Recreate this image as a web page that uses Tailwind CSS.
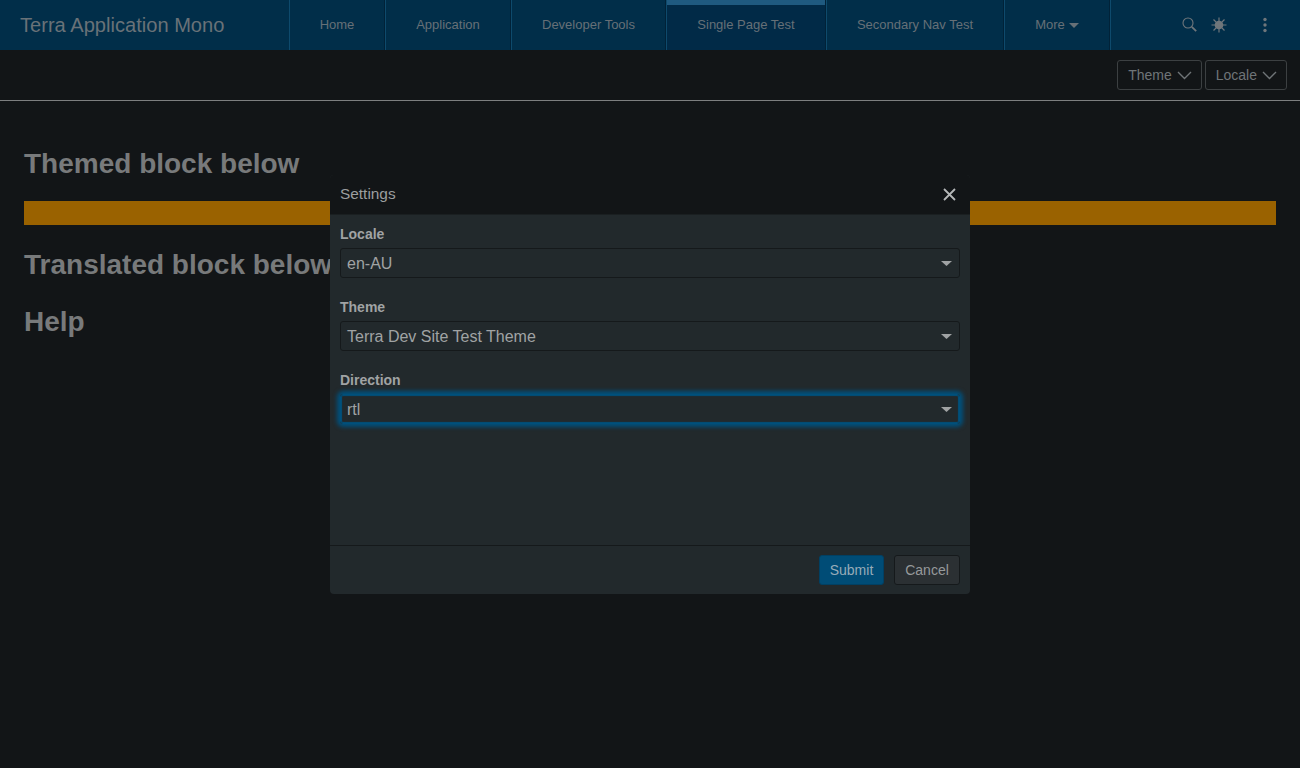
<!DOCTYPE html>
<html lang="en">
<head>
    <meta charset="UTF-8">
    <title>Terra Application Mono</title>
    <script src="https://cdn.jsdelivr.net/npm/@tailwindcss/browser@4"></script>
</head>
<body class="relative w-[1300px] h-[768px] overflow-hidden bg-[#121517] font-['Liberation_Sans',Arial,sans-serif]">

    <!-- Application header -->
    <header class="flex h-[50px] bg-[#012e49] text-[#667077]">
        <div class="w-[289px] pl-5 text-[20.1px] leading-[50px] text-[#697278]">Terra Application Mono</div>
        <nav class="flex text-[13px] leading-[50px]">
            <a class="w-[96px] text-center border-l border-r border-l-[#0e4a6c] border-r-[#012238]">Home</a>
            <a class="w-[126px] text-center border-l border-r border-l-[#0e4a6c] border-r-[#012238]">Application</a>
            <a class="w-[155px] text-center border-l border-r border-l-[#0e4a6c] border-r-[#012238]">Developer Tools</a>
            <a class="relative w-[160px] text-center border-l border-r border-l-[#0e4a6c] border-r-[#012238] bg-[#012a47]">
                <span class="absolute left-0 right-0 top-0 h-[5px] bg-[#1f5a80]"></span>
                Single Page Test
            </a>
            <a class="w-[178px] text-center border-l border-r border-l-[#0e4a6c] border-r-[#012238]">Secondary Nav Test</a>
            <a class="w-[106px] flex items-center justify-center gap-1 border-l border-r border-l-[#0e4a6c] border-r-[#012238]">
                More
                <svg width="10" height="5" viewBox="0 0 10 5"><path d="M0 0h10L5 5z" fill="#667077"/></svg>
            </a>
        </nav>
        <div class="relative flex-1 border-l border-[#0e4a6c]">
            <!-- search -->
            <svg class="absolute left-[71px] top-[17px]" width="15" height="15" viewBox="0 0 15 15" fill="none" stroke="#6f767b">
                <circle cx="6" cy="6" r="5" stroke-width="1.1"/>
                <path d="M9.800 9.800l4.400 4.400" stroke-width="1.800"/>
            </svg>
            <!-- sun -->
            <svg class="absolute left-[100px] top-[17px]" width="16" height="16" viewBox="0 0 16 16" fill="none" stroke="#6f767b" stroke-width="1.200">
                <circle cx="8" cy="8" r="4.300" fill="#6f767b" stroke="none"/>
                <path d="M8 0.500v15M0.500 8h15M2.500 2.500l11 11M13.500 2.500l-11 11"/>
            </svg>
            <!-- kebab -->
            <svg class="absolute left-[152px] top-[17px]" width="4" height="16" viewBox="0 0 4 16" fill="#6f767b">
                <circle cx="2" cy="2.500" r="1.700"/>
                <circle cx="2" cy="8" r="1.700"/>
                <circle cx="2" cy="13.500" r="1.700"/>
            </svg>
        </div>
    </header>

    <!-- Toolbar -->
    <div class="flex h-[51px] justify-end items-center gap-[3px] pr-[13px] border-b border-[#7d7f80]">
        <button class="flex items-center gap-[5px] h-[30px] pl-[10px] pr-[9px] rounded-[3px] border border-[#3c4042] text-sm text-[#6f7477]">
            Theme
            <svg width="15" height="9" viewBox="0 0 15 9" fill="none" stroke="#6f7477" stroke-width="1.400"><path d="M1 1l6.500 6.500L14 1"/></svg>
        </button>
        <button class="flex items-center gap-[5px] h-[30px] pl-[10px] pr-[9px] rounded-[3px] border border-[#3c4042] text-sm text-[#6f7477]">
            Locale
            <svg width="15" height="9" viewBox="0 0 15 9" fill="none" stroke="#6f7477" stroke-width="1.400"><path d="M1 1l6.500 6.500L14 1"/></svg>
        </button>
    </div>

    <!-- Page content -->
    <main class="px-6 pt-[47px] text-[#787a7b]">
        <h2 class="text-[28px] font-bold leading-[32px]">Themed block below</h2>
        <div class="h-6 mt-[21px] bg-[#9a6200]"></div>
        <h2 class="text-[28px] font-bold leading-[32px] mt-6">Translated block below</h2>
        <h2 class="text-[28px] font-bold leading-[32px] mt-[25px]">Help</h2>
    </main>

    <!-- Settings modal -->
    <div class="absolute left-[330px] top-[175px] w-[640px] h-[419px] flex flex-col rounded-[4px] overflow-hidden bg-[#22292c]">
        <div class="flex items-center justify-between h-10 pl-[10px] pr-[14px] bg-[#121517] border-b border-[#1a1f21]">
            <span class="text-[15.4px] leading-[18px] pb-[2px] text-[#9b9e9f]">Settings</span>
            <svg width="13" height="13" viewBox="0 0 13 13" fill="none" stroke="#b5b8b9" stroke-width="1.800"><path d="M1 1l11 11M12 1L1 12"/></svg>
        </div>
        <div class="flex-1 px-[10px] pt-[10px]">
            <label class="block text-sm font-bold leading-[18px] text-[#a0a3a4]">Locale</label>
            <div class="flex items-center justify-between h-[30px] mt-[5px] pl-[6px] pr-[7px] pt-px rounded-[3px] border border-[#15191b] text-base text-[#a0a3a4]">
                en-AU
                <svg width="11" height="5" viewBox="0 0 11 5"><path d="M0 0h11L5.500 5z" fill="#a0a3a4"/></svg>
            </div>
            <label class="block text-sm font-bold leading-[18px] mt-5 text-[#a0a3a4]">Theme</label>
            <div class="flex items-center justify-between h-[30px] mt-[5px] pl-[6px] pr-[7px] pt-px rounded-[3px] border border-[#15191b] text-base text-[#a0a3a4]">
                Terra Dev Site Test Theme
                <svg width="11" height="5" viewBox="0 0 11 5"><path d="M0 0h11L5.500 5z" fill="#a0a3a4"/></svg>
            </div>
            <label class="block text-sm font-bold leading-[18px] mt-5 text-[#a0a3a4]">Direction</label>
            <div class="flex items-center justify-between h-[30px] mt-[5px] pl-[6px] pr-[7px] pt-px rounded-[3px] border border-[#00507c] shadow-[0_0_4px_3px_#00507c,inset_0_0_1px_1px_#00507c] text-base text-[#a0a3a4]">
                rtl
                <svg width="11" height="5" viewBox="0 0 11 5"><path d="M0 0h11L5.500 5z" fill="#a0a3a4"/></svg>
            </div>
        </div>
        <div class="flex justify-end gap-[10px] h-[49px] pt-[9px] pr-[10px] border-t border-[#15191b]">
            <button class="h-[30px] w-[65px] rounded-[3px] border border-[#014063] bg-[#004c76] text-sm text-[#97abb8]">Submit</button>
            <button class="h-[30px] w-[66px] rounded-[3px] border border-[#15191b] bg-[#2b3033] text-sm text-[#96999b]">Cancel</button>
        </div>
    </div>

</body>
</html>
